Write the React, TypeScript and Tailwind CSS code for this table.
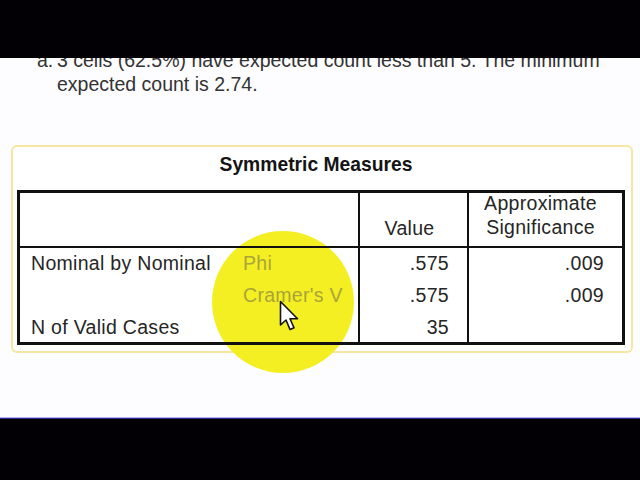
import React from "react";

const font = { fontFamily: '"Liberation Sans", Arial, sans-serif' };

function Cursor() {
  return (
    <svg width="22" height="32" viewBox="0 0 22 32" className="absolute left-[279px] top-[242px] z-[3]">
      <path
        d="M1.5 1.5 L1.5 25 L7 20 L11 29.5 L15 27.8 L11 18.8 L18.5 18.8 Z"
        fill="#ffffff"
        stroke="#111111"
        strokeWidth="1.6"
        strokeLinejoin="round"
      />
    </svg>
  );
}

export default function App() {
  return (
    <div className="w-[640px] h-[480px] flex flex-col bg-[#020005] overflow-hidden" style={font}>
      <div className="h-[58px] bg-[#020005] relative z-[5]" />
      <div className="h-[359px] bg-[#fdfcff] relative isolate">
        <div className="mt-[-10px] flex pl-[37px] text-[19.5px] leading-[24px] text-[#333333]">
          <span className="w-[20px]">a.</span>
          <div>
            <div className="whitespace-nowrap">3 cells (62.5%) have expected count less than 5. The minimum</div>
            <div className="whitespace-nowrap">expected count is 2.74.</div>
          </div>
        </div>

        <div className="mt-[49px] ml-[11px] w-[622px] border-2 border-[#f6e6a2] rounded-[6px] bg-white pt-[6px] pb-[6px]">
          <div className="text-center pr-[12px] text-[19.3px] leading-[24px] font-bold text-[#141414]">
            Symmetric Measures
          </div>
          <div className="relative z-[2] mt-[13px] ml-[4px] w-[608px] border-[3px] border-[#111111] text-[19.5px] tracking-[0.3px] text-[#262626]">
            <div className="grid grid-cols-[338px_109px_155px] grid-rows-[55px_32px_32px_30px] leading-[31px]">
              <div className="border-b-2 border-[#111111]" />
              <div className="border-b-2 border-l-2 border-[#111111] flex items-end justify-center pr-[8px] pb-[6px] leading-[24px]">
                Value
              </div>
              <div className="border-b-2 border-l-2 border-[#111111] flex flex-col items-center justify-end pr-[10px] pb-[7px] leading-[24px]">
                <span>Approximate</span>
                <span>Significance</span>
              </div>

              <div className="flex pl-[11px]">
                <span className="w-[212px] whitespace-nowrap">Nominal by Nominal</span>
                <span className="text-[#aaa43a]">Phi</span>
              </div>
              <div className="border-l-2 border-[#111111] text-right pr-[18px]">.575</div>
              <div className="border-l-2 border-[#111111] text-right pr-[18px]">.009</div>

              <div className="flex pl-[11px]">
                <span className="w-[212px]" />
                <span className="text-[#aaa43a] whitespace-nowrap">Cramer's V</span>
              </div>
              <div className="border-l-2 border-[#111111] text-right pr-[18px]">.575</div>
              <div className="border-l-2 border-[#111111] text-right pr-[18px]">.009</div>

              <div className="flex pl-[11px]">
                <span className="w-[212px] whitespace-nowrap">N of Valid Cases</span>
              </div>
              <div className="border-l-2 border-[#111111] text-right pr-[18px]">35</div>
              <div className="border-l-2 border-[#111111]" />
            </div>
          </div>
        </div>

        <div className="absolute left-[212px] top-[173px] w-[142px] h-[142px] rounded-full z-[1] bg-[radial-gradient(circle,#f4ef22_0%,#f4ef22_82%,rgba(244,239,34,0.55)_92%,rgba(244,239,34,0)_100%)]" />
        <Cursor />
      </div>
      <div className="h-[1px] bg-[#b4aef6]" />
      <div className="flex-1 bg-[#020005] border-t border-[#2c2790]" />
    </div>
  );
}
